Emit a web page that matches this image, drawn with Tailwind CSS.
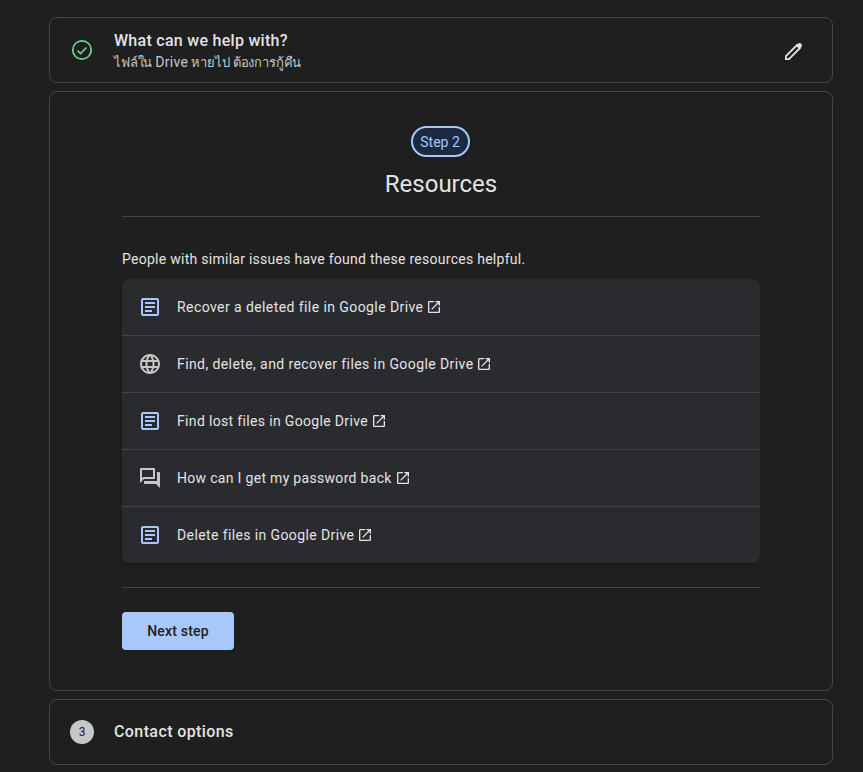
<!DOCTYPE html>
<html lang="en">
<head>
  <meta charset="UTF-8" />
  <title>Support</title>
  <script src="https://cdn.jsdelivr.net/npm/@tailwindcss/browser@4"></script>
</head>
<body class="bg-[#1f1f1f] h-[772px] overflow-hidden font-['Roboto','Noto_Sans',sans-serif] text-[#e3e3e3]">
  <div class="w-[784px] ml-[49px] pt-[17px] flex flex-col gap-2">

    <!-- Step 1 -->
    <div class="h-[66px] border border-[#444746] rounded-lg flex items-center pl-5 pr-[26px]">
      <svg class="w-6 h-6 text-[#6dd58c]" viewBox="0 0 24 24" fill="none" stroke="currentColor">
        <circle cx="12" cy="12" r="9.200" stroke-width="1.700"/>
        <path d="M7.500 12.500l3 3 6-6" stroke-width="1.600"/>
      </svg>
      <div class="ml-5 flex-1 pt-[2px]">
        <div class="text-base font-medium leading-[22px] tracking-[0.28px] text-[#e3e3e3]">What can we help with?</div>
        <div class="text-[13px] leading-[20px] tracking-[-0.15px] text-[#c4c7c5]">ไฟล์ใน <span class="text-sm tracking-[0.3px]">Drive</span> หายไป ต้องการกู้คืน</div>
      </div>
      <svg class="w-6 h-6 mt-[2px] text-[#e3e3e3]" viewBox="0 0 24 24" fill="none" stroke="currentColor">
        <path d="M3.900 20.100v-3L15 6l3 3L7 20.100H3.900z" stroke-width="1.800"/>
        <path d="M14 6.500l2-2a2.500 2.500 0 0 1 3.500 3.500l-2 2L14 6.500z" fill="currentColor" stroke="none"/>
      </svg>
    </div>

    <!-- Step 2 -->
    <div class="h-[600px] border border-[#444746] rounded-lg px-[72px] pt-[34px]">
      <div class="flex flex-col items-center border-b border-[#444746] h-[91px]">
        <span class="h-[31px] w-[59px] mr-[2px] flex items-center justify-center rounded-full border-2 border-[#a8c7fa] bg-[#1b2a41] text-[#a8c7fa] text-sm">Step 2</span>
        <h1 class="mt-[11px] text-2xl leading-[32px] text-[#e3e3e3]">Resources</h1>
      </div>

      <p class="mt-[32px] text-sm leading-5 tracking-[0.27px] text-[#e3e3e3]">People with similar issues have found these resources helpful.</p>

      <ul class="mt-[10px] bg-[#2a2b2f] rounded-lg shadow-md divide-y divide-[#444746] text-sm">
        <li class="h-[57px] flex items-center pl-4">
          <svg class="w-6 h-6 text-[#a8c7fa]" viewBox="0 0 24 24" fill="currentColor"><path d="M19 5v14H5V5h14m0-2H5c-1.100 0-2 .9-2 2v14c0 1.100.9 2 2 2h14c1.100 0 2-.9 2-2V5c0-1.100-.9-2-2-2z"/><path d="M14 17H7v-2h7v2zm3-4H7v-2h10v2zm0-4H7V7h10v2z"/></svg>
          <span class="ml-[15px] tracking-[0.42px]">Recover a deleted file in Google Drive</span>
          <svg class="w-4 h-4 ml-[3px]" viewBox="0 0 24 24" fill="currentColor"><path d="M19 19H5V5h7V3H5c-1.110 0-2 .9-2 2v14c0 1.100.89 2 2 2h14c1.100 0 2-.9 2-2v-7h-2v7zM14 3v2h3.590l-9.830 9.830 1.410 1.410L19 6.410V10h2V3h-7z"/></svg>
        </li>
        <li class="h-[57px] flex items-center pl-4">
          <svg class="w-6 h-6 text-[#c4c7c5]" viewBox="0 0 24 24" fill="currentColor"><path d="M11.990 2C6.470 2 2 6.480 2 12s4.470 10 9.990 10C17.520 22 22 17.520 22 12S17.520 2 11.990 2zm6.930 6h-2.950c-.32-1.250-.78-2.450-1.380-3.560 1.840.63 3.370 1.910 4.330 3.560zM12 4.040c.83 1.200 1.480 2.530 1.910 3.960h-3.820c.43-1.430 1.080-2.760 1.910-3.960zM4.260 14C4.100 13.360 4 12.690 4 12s.1-1.360.26-2h3.380c-.08.66-.14 1.320-.14 2s.06 1.340.14 2H4.260zm.82 2h2.950c.32 1.250.78 2.450 1.380 3.560-1.840-.63-3.370-1.900-4.330-3.560zm2.950-8H5.080c.96-1.660 2.490-2.930 4.330-3.560C8.810 5.550 8.350 6.750 8.030 8zM12 19.960c-.83-1.200-1.480-2.530-1.910-3.960h3.820c-.43 1.430-1.080 2.760-1.910 3.960zM14.340 14H9.660c-.09-.66-.16-1.320-.16-2s.07-1.350.16-2h4.680c.09.65.16 1.320.16 2s-.07 1.340-.16 2zm.25 5.560c.6-1.110 1.060-2.310 1.380-3.560h2.950c-.96 1.650-2.490 2.930-4.330 3.560zM16.360 14c.08-.66.14-1.320.14-2s-.06-1.340-.14-2h3.380c.16.64.26 1.310.26 2s-.1 1.360-.26 2h-3.380z"/></svg>
          <span class="ml-[15px] tracking-[0.41px]">Find, delete, and recover files in Google Drive</span>
          <svg class="w-4 h-4 ml-[3px]" viewBox="0 0 24 24" fill="currentColor"><path d="M19 19H5V5h7V3H5c-1.110 0-2 .9-2 2v14c0 1.100.89 2 2 2h14c1.100 0 2-.9 2-2v-7h-2v7zM14 3v2h3.590l-9.830 9.830 1.410 1.410L19 6.410V10h2V3h-7z"/></svg>
        </li>
        <li class="h-[57px] flex items-center pl-4">
          <svg class="w-6 h-6 text-[#a8c7fa]" viewBox="0 0 24 24" fill="currentColor"><path d="M19 5v14H5V5h14m0-2H5c-1.100 0-2 .9-2 2v14c0 1.100.9 2 2 2h14c1.100 0 2-.9 2-2V5c0-1.100-.9-2-2-2z"/><path d="M14 17H7v-2h7v2zm3-4H7v-2h10v2zm0-4H7V7h10v2z"/></svg>
          <span class="ml-[15px] tracking-[0.34px]">Find lost files in Google Drive</span>
          <svg class="w-4 h-4 ml-[3px]" viewBox="0 0 24 24" fill="currentColor"><path d="M19 19H5V5h7V3H5c-1.110 0-2 .9-2 2v14c0 1.100.89 2 2 2h14c1.100 0 2-.9 2-2v-7h-2v7zM14 3v2h3.590l-9.830 9.830 1.410 1.410L19 6.410V10h2V3h-7z"/></svg>
        </li>
        <li class="h-[57px] flex items-center pl-4">
          <svg class="w-6 h-6 text-[#c4c7c5]" viewBox="0 0 24 24" fill="currentColor"><path d="M15 4v7H5.170L4 12.170V4h11m1-2H3c-.55 0-1 .45-1 1v14l4-4h10c.55 0 1-.45 1-1V3c0-.55-.45-1-1-1zm5 4h-2v9H6v2c0 .55.45 1 1 1h11l4 4V7c0-.55-.45-1-1-1z"/></svg>
          <span class="ml-[15px] tracking-[0.31px]">How can I get my password back</span>
          <svg class="w-4 h-4 ml-[3px]" viewBox="0 0 24 24" fill="currentColor"><path d="M19 19H5V5h7V3H5c-1.110 0-2 .9-2 2v14c0 1.100.89 2 2 2h14c1.100 0 2-.9 2-2v-7h-2v7zM14 3v2h3.590l-9.830 9.830 1.410 1.410L19 6.410V10h2V3h-7z"/></svg>
        </li>
        <li class="h-[56px] flex items-center pl-4">
          <svg class="w-6 h-6 text-[#a8c7fa]" viewBox="0 0 24 24" fill="currentColor"><path d="M19 5v14H5V5h14m0-2H5c-1.100 0-2 .9-2 2v14c0 1.100.9 2 2 2h14c1.100 0 2-.9 2-2V5c0-1.100-.9-2-2-2z"/><path d="M14 17H7v-2h7v2zm3-4H7v-2h10v2zm0-4H7V7h10v2z"/></svg>
          <span class="ml-[15px] tracking-[0.39px]">Delete files in Google Drive</span>
          <svg class="w-4 h-4 ml-[3px]" viewBox="0 0 24 24" fill="currentColor"><path d="M19 19H5V5h7V3H5c-1.110 0-2 .9-2 2v14c0 1.100.89 2 2 2h14c1.100 0 2-.9 2-2v-7h-2v7zM14 3v2h3.590l-9.830 9.830 1.410 1.410L19 6.410V10h2V3h-7z"/></svg>
        </li>
      </ul>

      <div class="mt-6 border-t border-[#444746] pt-6">
        <button class="w-[112px] h-[38px] bg-[#a8c7fa] text-[#1f1f1f] rounded text-sm font-medium tracking-[0.2px]">Next step</button>
      </div>
    </div>

    <!-- Step 3 -->
    <div class="h-[66px] border border-[#444746] rounded-lg flex items-center pl-5">
      <span class="w-6 h-6 rounded-full bg-[#c7c7c7] text-[#1f1f1f] text-xs flex items-center justify-center">3</span>
      <span class="ml-5 text-base font-medium tracking-[0.4px] text-[#e3e3e3]">Contact options</span>
    </div>
  </div>
</body>
</html>
